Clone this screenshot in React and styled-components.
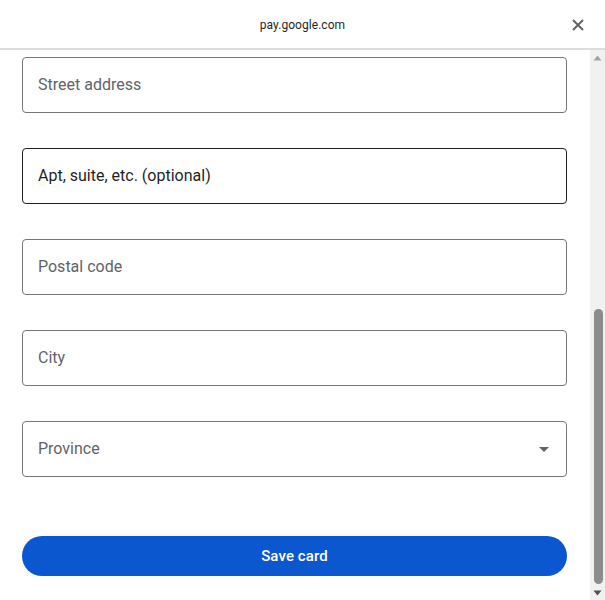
import React from "react";
import styled, { createGlobalStyle } from "styled-components";

const Global = createGlobalStyle`
  html, body { margin: 0; padding: 0; background: #ffffff; }
  body { font-family: Roboto, "Liberation Sans", Arial, sans-serif; }
  * { box-sizing: border-box; }
`;

const Dialog = styled.div`
  width: 605px;
  height: 600px;
  display: flex;
  flex-direction: column;
  background: #ffffff;
  overflow: hidden;
`;

const Header = styled.header`
  height: 50px;
  flex: none;
  display: grid;
  grid-template-columns: 1fr auto 1fr;
  align-items: center;
  border-bottom: 2px solid #dadce0;
  padding: 1px 0 0 0;
`;

const Title = styled.div`
  grid-column: 2;
  font-size: 12px;
  color: #1f1f1f;
  letter-spacing: 0.05px;
`;

const CloseButton = styled.button`
  grid-column: 3;
  justify-self: end;
  margin-right: 19px;
  width: 16px;
  height: 16px;
  padding: 0;
  border: none;
  background: none;
  display: flex;
  align-items: center;
  justify-content: center;
  cursor: pointer;
`;

const Body = styled.div`
  flex: 1;
  display: flex;
  min-height: 0;
`;

const Content = styled.div`
  flex: 1;
  padding: 7px 23px 0 22px;
  display: flex;
  flex-direction: column;
  gap: 35px;
`;

const Field = styled.div`
  height: 56px;
  border: 1px solid ${(p) => (p.$focused ? "#1f1f1f" : "#747775")};
  border-radius: 4px;
  display: flex;
  align-items: center;
  padding: 0 17px 2px 15px;
  font-size: 16px;
  color: ${(p) => (p.$focused ? "#1f1f1f" : "#5f6368")};
`;

const FieldLabel = styled.span`
  flex: 1;
`;

const Caret = styled.span`
  width: 0;
  height: 0;
  border-left: 5px solid transparent;
  border-right: 5px solid transparent;
  border-top: 5px solid #5f6368;
  margin-top: 2px;
`;

const SaveButton = styled.button`
  margin-top: 24px;
  height: 40px;
  border: none;
  border-radius: 20px;
  background: #0b57d0;
  color: #ffffff;
  font-family: Roboto, "Liberation Sans", Arial, sans-serif;
  font-size: 15px;
  font-weight: 500;
  letter-spacing: 0.1px;
  cursor: pointer;
`;

const Scrollbar = styled.div`
  width: 15px;
  flex: none;
  background: #f1f1f1;
  display: flex;
  flex-direction: column;
  align-items: center;
`;

const Arrow = styled.div`
  height: 15px;
  flex: none;
  display: flex;
  align-items: center;
  justify-content: center;
`;

const Track = styled.div`
  flex: 1;
  width: 100%;
  display: flex;
  flex-direction: column;
  align-items: center;
`;

const Spacer = styled.div`
  flex: none;
  height: ${(p) => p.$h}px;
`;

const Thumb = styled.div`
  flex: 1;
  width: 9px;
  margin-left: 2px;
  margin-bottom: 1px;
  background: #8c8c8c;
  border-radius: 5px;
`;

const fields = [
  { label: "Street address" },
  { label: "Apt, suite, etc. (optional)", focused: true },
  { label: "Postal code" },
  { label: "City" },
  { label: "Province", select: true },
];

export default function App() {
  return (
    <>
      <Global />
      <Dialog>
        <Header>
          <Title>pay.google.com</Title>
          <CloseButton aria-label="Close">
            <svg width="12" height="12" viewBox="0 0 12 12">
              <path d="M1 1L11 11M11 1L1 11" stroke="#5f6368" strokeWidth="2" />
            </svg>
          </CloseButton>
        </Header>
        <Body>
          <Content>
            {fields.map((f) => (
              <Field key={f.label} $focused={f.focused}>
                <FieldLabel>{f.label}</FieldLabel>
                {f.select && <Caret />}
              </Field>
            ))}
            <SaveButton>Save card</SaveButton>
          </Content>
          <Scrollbar>
            <Arrow>
              <svg width="9" height="6" viewBox="0 0 9 6">
                <path d="M4.5 0.5L8.5 5.5H0.5Z" fill="#a3a3a3" />
              </svg>
            </Arrow>
            <Track>
              <Spacer $h={244} />
              <Thumb />
            </Track>
            <Arrow>
              <svg width="9" height="6" viewBox="0 0 9 6">
                <path d="M0.5 0.5H8.5L4.5 5.5Z" fill="#505050" />
              </svg>
            </Arrow>
          </Scrollbar>
        </Body>
      </Dialog>
    </>
  );
}
